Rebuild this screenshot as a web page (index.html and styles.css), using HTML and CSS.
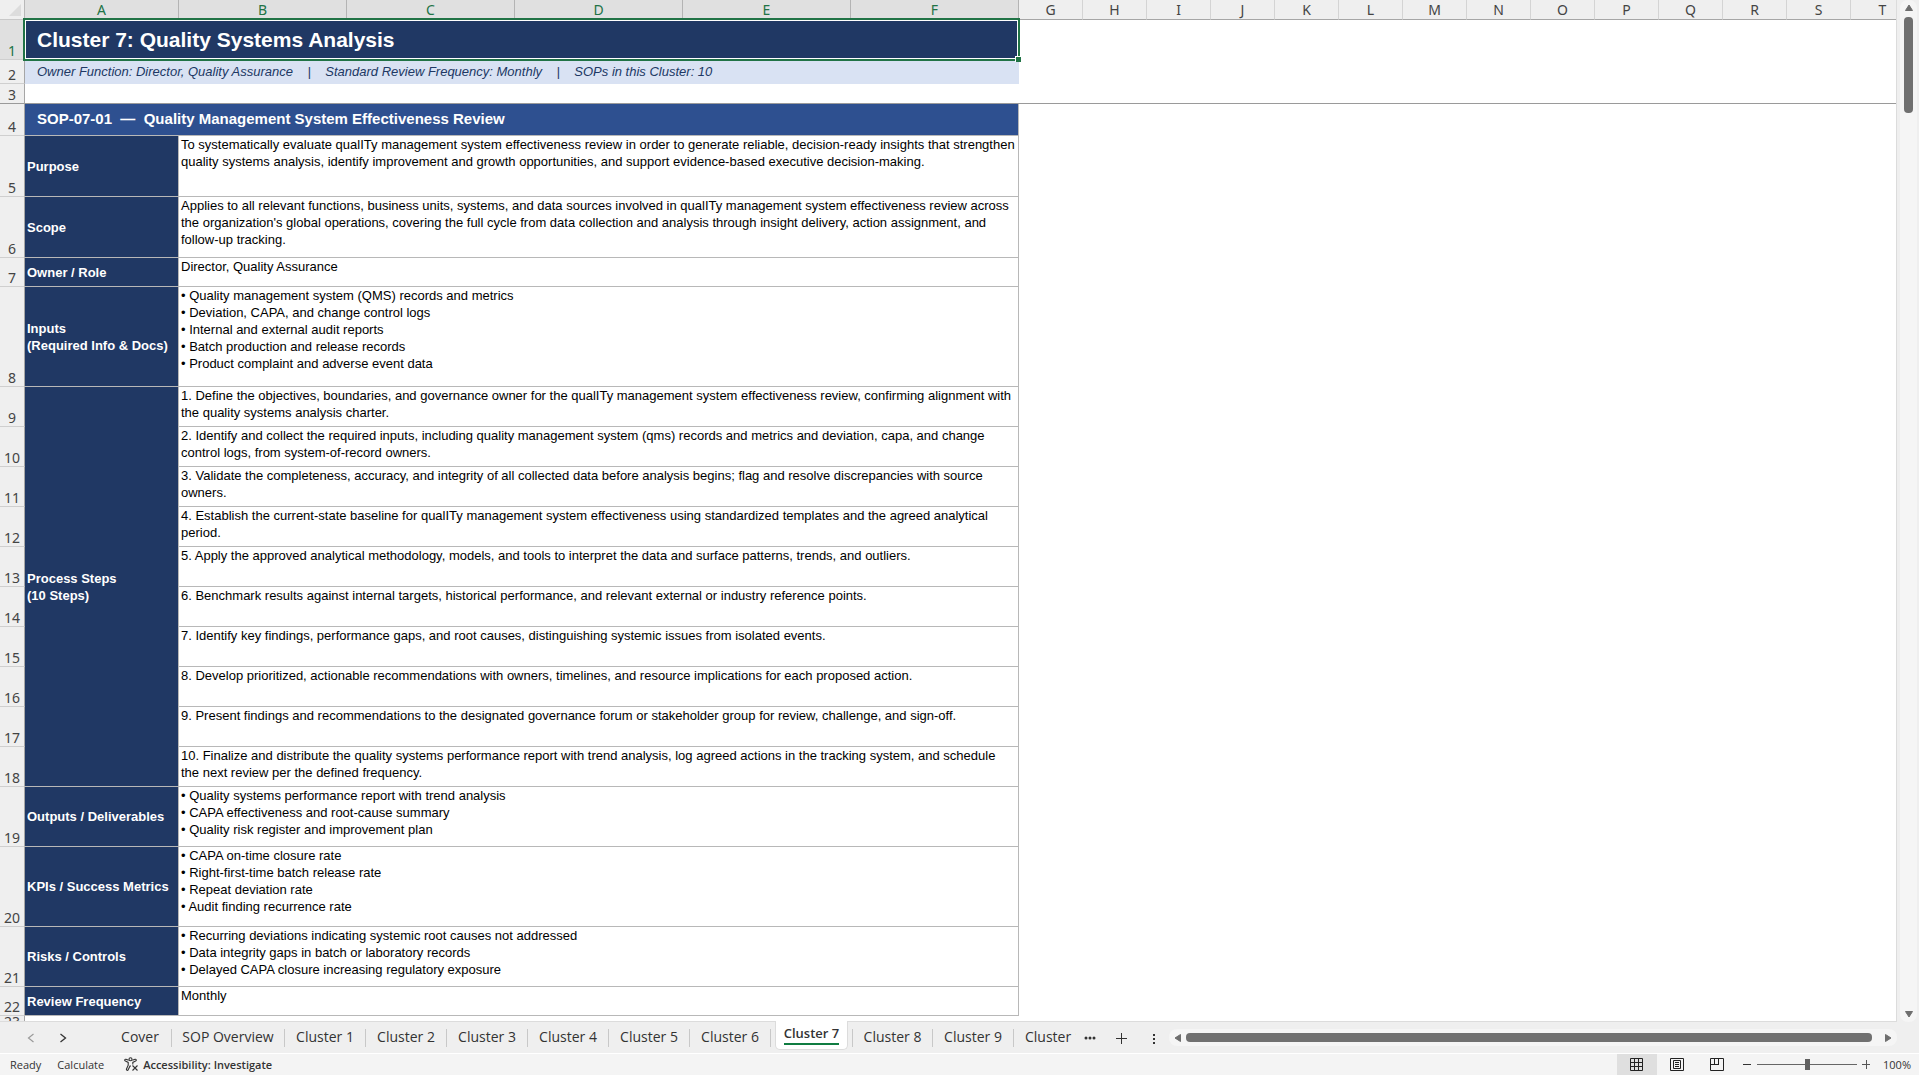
FILE: index.html
```html
<!DOCTYPE html>
<html lang="en">
  <head>
    <meta charset="utf-8">
    <title>Cluster 7</title>
    <link rel="stylesheet" href="styles.css">
  </head>
  <body>
    <main class="workspace">
      <div class="sheet">
        <table class="grid">
          <colgroup>
            <col class="col-num">
            <col class="col-label">
            <col class="col-wide" span="5">
            <col class="col-std" span="14">
          </colgroup>
          <thead>
            <tr>
              <td class="corner"><svg width="12" height="12" viewBox="0 0 12 12"><path d="M12 0v12H0z" fill="#dcdcdc"/></svg></td>
              <th class="sel">A</th><th class="sel">B</th><th class="sel">C</th><th class="sel">D</th><th class="sel">E</th><th class="sel">F</th>
              <th>G</th><th>H</th><th>I</th><th>J</th><th>K</th><th>L</th><th>M</th><th>N</th><th>O</th><th>P</th><th>Q</th><th>R</th><th>S</th><th>T</th>
            </tr>
          </thead>
          <tbody>
            <tr class="h40">
              <th class="sel">1</th>
              <td class="title" colspan="6">Cluster 7: Quality Systems Analysis<span class="handle"></span></td>
              <td colspan="14"></td>
            </tr>
            <tr class="h24">
              <th>2</th>
              <td class="meta" colspan="6">Owner Function: Director, Quality Assurance &nbsp;&nbsp; | &nbsp;&nbsp; Standard Review Frequency: Monthly &nbsp;&nbsp; | &nbsp;&nbsp; SOPs in this Cluster: 10</td>
              <td colspan="14"></td>
            </tr>
            <tr class="h20 frozen">
              <th>3</th>
              <td colspan="20"></td>
            </tr>
            <tr class="h32">
              <th>4</th>
              <td class="sop" colspan="6">SOP-07-01 &nbsp;— &nbsp;Quality Management System Effectiveness Review</td>
              <td colspan="14"></td>
            </tr>
            <tr class="h61">
              <th>5</th>
              <td class="label">Purpose</td>
              <td class="text" colspan="5">To systematically evaluate qualITy management system effectiveness review in order to generate reliable, decision-ready insights that strengthen<br>quality systems analysis, identify improvement and growth opportunities, and support evidence-based executive decision-making.</td>
              <td colspan="14"></td>
            </tr>
            <tr class="h61">
              <th>6</th>
              <td class="label">Scope</td>
              <td class="text" colspan="5">Applies to all relevant functions, business units, systems, and data sources involved in qualITy management system effectiveness review across<br>the organization's global operations, covering the full cycle from data collection and analysis through insight delivery, action assignment, and<br>follow-up tracking.</td>
              <td colspan="14"></td>
            </tr>
            <tr class="h29">
              <th>7</th>
              <td class="label">Owner / Role</td>
              <td class="text" colspan="5">Director, Quality Assurance</td>
              <td colspan="14"></td>
            </tr>
            <tr class="h100">
              <th>8</th>
              <td class="label">Inputs<br>(Required Info &amp; Docs)</td>
              <td class="text" colspan="5">• Quality management system (QMS) records and metrics<br>• Deviation, CAPA, and change control logs<br>• Internal and external audit reports<br>• Batch production and release records<br>• Product complaint and adverse event data</td>
              <td colspan="14"></td>
            </tr>
            <tr class="h40">
              <th>9</th>
              <td class="label" rowspan="10">Process Steps<br>(10 Steps)</td>
              <td class="text" colspan="5">1. Define the objectives, boundaries, and governance owner for the qualITy management system effectiveness review, confirming alignment with<br>the quality systems analysis charter.</td>
              <td colspan="14"></td>
            </tr>
            <tr class="h40">
              <th>10</th>
              <td class="text" colspan="5">2. Identify and collect the required inputs, including quality management system (qms) records and metrics and deviation, capa, and change<br>control logs, from system-of-record owners.</td>
              <td colspan="14"></td>
            </tr>
            <tr class="h40">
              <th>11</th>
              <td class="text" colspan="5">3. Validate the completeness, accuracy, and integrity of all collected data before analysis begins; flag and resolve discrepancies with source<br>owners.</td>
              <td colspan="14"></td>
            </tr>
            <tr class="h40">
              <th>12</th>
              <td class="text" colspan="5">4. Establish the current-state baseline for qualITy management system effectiveness using standardized templates and the agreed analytical<br>period.</td>
              <td colspan="14"></td>
            </tr>
            <tr class="h40">
              <th>13</th>
              <td class="text" colspan="5">5. Apply the approved analytical methodology, models, and tools to interpret the data and surface patterns, trends, and outliers.</td>
              <td colspan="14"></td>
            </tr>
            <tr class="h40">
              <th>14</th>
              <td class="text" colspan="5">6. Benchmark results against internal targets, historical performance, and relevant external or industry reference points.</td>
              <td colspan="14"></td>
            </tr>
            <tr class="h40">
              <th>15</th>
              <td class="text" colspan="5">7. Identify key findings, performance gaps, and root causes, distinguishing systemic issues from isolated events.</td>
              <td colspan="14"></td>
            </tr>
            <tr class="h40">
              <th>16</th>
              <td class="text" colspan="5">8. Develop prioritized, actionable recommendations with owners, timelines, and resource implications for each proposed action.</td>
              <td colspan="14"></td>
            </tr>
            <tr class="h40">
              <th>17</th>
              <td class="text" colspan="5">9. Present findings and recommendations to the designated governance forum or stakeholder group for review, challenge, and sign-off.</td>
              <td colspan="14"></td>
            </tr>
            <tr class="h40">
              <th>18</th>
              <td class="text" colspan="5">10. Finalize and distribute the quality systems performance report with trend analysis, log agreed actions in the tracking system, and schedule<br>the next review per the defined frequency.</td>
              <td colspan="14"></td>
            </tr>
            <tr class="h60">
              <th>19</th>
              <td class="label">Outputs / Deliverables</td>
              <td class="text" colspan="5">• Quality systems performance report with trend analysis<br>• CAPA effectiveness and root-cause summary<br>• Quality risk register and improvement plan</td>
              <td colspan="14"></td>
            </tr>
            <tr class="h80">
              <th>20</th>
              <td class="label">KPIs / Success Metrics</td>
              <td class="text" colspan="5">• CAPA on-time closure rate<br>• Right-first-time batch release rate<br>• Repeat deviation rate<br>• Audit finding recurrence rate</td>
              <td colspan="14"></td>
            </tr>
            <tr class="h60">
              <th>21</th>
              <td class="label">Risks / Controls</td>
              <td class="text" colspan="5">• Recurring deviations indicating systemic root causes not addressed<br>• Data integrity gaps in batch or laboratory records<br>• Delayed CAPA closure increasing regulatory exposure</td>
              <td colspan="14"></td>
            </tr>
            <tr class="h29">
              <th>22</th>
              <td class="label">Review Frequency</td>
              <td class="text" colspan="5">Monthly</td>
              <td colspan="14"></td>
            </tr>
            <tr class="h12">
              <th>23</th>
              <td colspan="20"></td>
            </tr>
          </tbody>
        </table>
      </div>
      <div class="vscroll">
        <button class="arrow" aria-label="Scroll up"><svg width="10" height="8" viewBox="0 0 10 8"><path d="M5 1l3.500 5.500h-7z"/></svg></button>
        <div class="vthumb"></div>
        <button class="arrow" aria-label="Scroll down"><svg width="10" height="8" viewBox="0 0 10 8"><path d="M5 7l3.500-5.500h-7z"/></svg></button>
      </div>
    </main>

    <nav class="tabbar">
      <div class="tabnav">
        <button aria-label="Previous sheet"><svg width="8" height="10" viewBox="0 0 8 10"><path d="M6.500 1l-5 4 5 4" fill="none" stroke="#9a9a9a" stroke-width="1.200"/></svg></button>
        <button aria-label="Next sheet"><svg width="8" height="10" viewBox="0 0 8 10"><path d="M1.500 1l5 4-5 4" fill="none" stroke="#333" stroke-width="1.300"/></svg></button>
      </div>
      <div class="tabs">
        <button class="tab cover">Cover</button>
        <button class="tab overview">SOP Overview</button>
        <button class="tab">Cluster 1</button>
        <button class="tab">Cluster 2</button>
        <button class="tab">Cluster 3</button>
        <button class="tab">Cluster 4</button>
        <button class="tab">Cluster 5</button>
        <button class="tab">Cluster 6</button>
        <button class="tab active"><span>Cluster 7</span></button>
        <button class="tab after">Cluster 8</button>
        <button class="tab">Cluster 9</button>
        <button class="tab cut">Cluster 10</button>
      </div>
      <div class="tabtools">
        <button aria-label="More sheets"><svg width="12" height="12" viewBox="0 0 12 12" fill="#333"><circle cx="2" cy="6" r="1.500"/><circle cx="6" cy="6" r="1.500"/><circle cx="10" cy="6" r="1.500"/></svg></button>
        <button aria-label="New sheet"><svg width="12" height="12" viewBox="0 0 12 12"><path d="M0 6.500h11M5.500 1v11" stroke="#333" stroke-width="1"/></svg></button>
        <button aria-label="Resize tab bar"><svg width="12" height="12" viewBox="0 0 12 12" fill="#333"><path d="M5 2h2v2H5zM5 6h2v2H5zM5 10h2v2H5z"/></svg></button>
      </div>
      <div class="hscroll">
        <button class="arrow" aria-label="Scroll left"><svg width="8" height="10" viewBox="0 0 8 10"><path d="M1 5l5.500-3.500v7z"/></svg></button>
        <div class="hthumb"></div>
        <button class="arrow" aria-label="Scroll right"><svg width="8" height="10" viewBox="0 0 8 10"><path d="M7 5L1.500 1.500v7z"/></svg></button>
      </div>
    </nav>

    <footer class="status">
      <span class="state">Ready</span>
      <span class="state">Calculate</span>
      <button class="access">
        <svg width="15" height="15" viewBox="0 0 15 15" fill="none" stroke="#333" stroke-width="1.100"><circle cx="6.500" cy="2.200" r="1.500"/><path d="M4.700 3.200L2 2.300c-1.300-.3-1.800 1.300-.6 1.800l2.800 1.300v2.700L2.500 12c-.4 1.400 1.200 1.800 1.700.7L6 9h1M8.300 3.200l2.700-.9c1.300-.3 1.800 1.300.6 1.800L8.800 5.400v2M8.500 8.500l5 5M13.500 8.500l-5 5"/></svg>
        Accessibility: Investigate
      </button>
      <div class="views">
        <button class="on" aria-label="Normal view"><svg width="14" height="14" viewBox="0 0 14 14" fill="none" stroke="#222"><path d="M.5.500h12v12H.5zM.5 4.500h12M.5 8.500h12M4.500.500v12M8.500.500v12"/></svg></button>
        <button aria-label="Page layout"><svg width="14" height="14" viewBox="0 0 14 14" fill="none" stroke="#222"><path d="M.5.500h13v12H.5zM3.500 2.500h7v8h-7zM5 4.500h4M5 6.500h4M5 8.500h4"/></svg></button>
        <button aria-label="Page break preview"><svg width="14" height="14" viewBox="0 0 14 14" fill="none" stroke="#222"><path d="M.5.500h13v12H.5zM4.500.500v6M8.500.500v6M0 6.500h9"/></svg></button>
      </div>
      <div class="zoom">
        <button aria-label="Zoom out"><svg width="9" height="9" viewBox="0 0 9 9"><path d="M0 4.500h8" stroke="#333"/></svg></button>
        <input type="range" min="0" max="100" value="50" aria-label="Zoom">
        <button aria-label="Zoom in"><svg width="9" height="9" viewBox="0 0 9 9"><path d="M0 4.500h8M4.500 0v9" stroke="#555"/></svg></button>
        <span class="percent">100%</span>
      </div>
    </footer>
  </body>
</html>
```
FILE: styles.css
```css
* { box-sizing: border-box; }

body {
  margin: 0;
  height: 100vh;
  display: flex;
  flex-direction: column;
  overflow: hidden;
  background: #efefef;
  color: #333;
  font-family: "Open Sans", "Noto Sans", sans-serif;
  font-size: 13px;
}
button {
  border: 0;
  padding: 0;
  margin: 0;
  background: none;
  font: inherit;
  color: inherit;
  display: flex;
  align-items: center;
  justify-content: center;
}
svg { display: block; }

/* SHEET ======================================= */
.workspace {
  flex: 1;
  min-height: 0;
  display: flex;
}
.sheet {
  flex: 1;
  min-width: 0;
  overflow: hidden;
  background: #fff;
  border-right: 1px solid #dcdcdc;
  border-bottom: 1px solid #dcdcdc;
}
.grid {
  width: 0;
  table-layout: fixed;
  border-collapse: separate;
  border-spacing: 0;
}
.col-num { width: 25px; }
.col-label { width: 154px; }
.col-wide { width: 168px; }
.col-std { width: 64px; }

.grid td, .grid th {
  padding: 0;
  white-space: nowrap;
}
.grid th {
  background: #efefef;
  color: #444;
  font-family: "Noto Sans", sans-serif;
  font-weight: normal;
  font-size: 14px;
  text-align: center;
}
thead th {
  height: 20px;
  line-height: 18px;
  border-right: 1px solid #d4d4d4;
  border-bottom: 1px solid #a6a6a6;
}
thead th.sel { border-right-color: #b4b4b4; }
.grid th.sel {
  background: #e0e0e0;
  color: #217346;
}
.corner {
  background: #efefef;
  border-right: 1px solid #b8b8b8;
  border-bottom: 1px solid #c8c8c8;
}
.corner svg { margin-left: 9px; }
tbody th {
  vertical-align: bottom;
  line-height: 16px;
  border-right: 1px solid #a6a6a6;
  border-bottom: 1px solid #cfcfcf;
}

.h12 { height: 12px; }
.h20 { height: 20px; }
.h24 { height: 24px; }
.h29 { height: 29px; }
.h32 { height: 32px; }
.h40 { height: 40px; }
.h60 { height: 60px; }
.h61 { height: 61px; }
.h80 { height: 80px; }
.h100 { height: 100px; }
.h12 th { line-height: 12px; }

.frozen th, .frozen td { border-bottom: 1px solid #9a9a9a; }

.title, .meta, .sop, .label, .text {
  font-family: "Liberation Sans", Arial, sans-serif;
}
.grid .title {
  position: relative;
  padding-left: 12px;
  background: #203864;
  color: #fff;
  font-size: 21px;
  font-weight: bold;
}
/* selection frame */
.title::after {
  content: '';
  position: absolute;
  top: -2px;
  left: -2px;
  right: -1px;
  bottom: -1px;
  border: 2px solid #217346;
  box-shadow: inset 0 0 0 1px #fff;
}
.handle {
  position: absolute;
  z-index: 1;
  right: -2px;
  bottom: -2px;
  width: 6px;
  height: 6px;
  background: #217346;
  border-top: 1px solid #fff;
  border-left: 1px solid #fff;
}
.grid .meta {
  padding: 0 0 2px 12px;
  background: #d9e2f3;
  color: #203864;
  font-size: 13px;
  font-style: italic;
}
.grid .sop {
  padding: 0 0 2px 12px;
  background: #2e5090;
  color: #fff;
  font-size: 15px;
  font-weight: bold;
  border-right: 1px solid #b8b8b8;
  border-bottom: 1px solid #b8b8b8;
}
.grid .label {
  padding-left: 2px;
  background: #203864;
  color: #fff;
  font-size: 13px;
  font-weight: bold;
  line-height: 17px;
  vertical-align: middle;
  border-right: 1px solid #b8b8b8;
  border-bottom: 1px solid #b8b8b8;
}
.grid .text {
  padding-left: 2px;
  color: #000;
  font-size: 13px;
  line-height: 17px;
  vertical-align: top;
  border-right: 1px solid #b8b8b8;
  border-bottom: 1px solid #b8b8b8;
}

/* SCROLLBARS ================================== */
.arrow svg { fill: #6e6e6e; stroke: #6e6e6e; stroke-linejoin: round; }
.vscroll {
  width: 17px;
  margin: 0 2px 0 3px;
  padding: 4px 0;
  display: flex;
  flex-direction: column;
  align-items: center;
  gap: 5px;
  background: #f5f5f5;
  border-radius: 8px;
}
.vthumb {
  width: 9px;
  height: 96px;
  margin-bottom: auto;
  border-radius: 4px;
  background: #707070;
}
.hscroll {
  flex: 1;
  height: 17px;
  padding: 0 5px;
  display: flex;
  align-items: center;
  gap: 4px;
  border-radius: 8px;
  background: #f5f5f5;
}
.hthumb {
  flex: 1;
  height: 9px;
  margin-right: 8px;
  border-radius: 4px;
  background: #707070;
}

/* TABS ======================================== */
.tabbar {
  height: 32px;
  padding-right: 22px;
  display: flex;
  align-items: center;
  border-bottom: 1px solid #fff;
}
.tabnav {
  width: 109px;
  padding-left: 27px;
  display: flex;
  gap: 24px;
}
.tabs {
  height: 100%;
  display: flex;
  align-items: center;
}
.tab {
  width: 81px;
  height: 18px;
  padding-bottom: 2px;
  border-right: 1px solid #c8c8c8;
  font-size: 14px;
  white-space: nowrap;
}
.cover { width: 63px; }
.overview { width: 113px; }
.tab.active {
  align-self: flex-start;
  width: 73px;
  height: 29px;
  margin: -1px 4px 0 4px;
  border: 1px solid #dcdcdc;
  border-top: 0;
  border-radius: 0 0 5px 5px;
  background: #fff;
  font-size: 13px;
  font-weight: 600;
}
.active span {
  line-height: 20px;
  border-bottom: 2px solid #107c41;
}
.tab.after { border-left: 1px solid #c8c8c8; }
.cut {
  width: 62px;
  padding-left: 11px;
  justify-content: flex-start;
  overflow: hidden;
  border: 0;
}
.tabtools {
  margin-left: 8px;
  padding-right: 9px;
  display: flex;
  gap: 20px;
}

/* STATUS BAR ================================== */
.status {
  height: 21px;
  padding: 0 8px 0 10px;
  display: flex;
  align-items: center;
  background: #f4f4f4;
  font-size: 11px;
}
.state { margin-right: 16px; }
.access {
  margin-left: 4px;
  gap: 4px;
  font-weight: 600;
}
.views {
  height: 100%;
  margin-left: auto;
  margin-right: 6px;
  display: flex;
}
.views button { width: 40px; }
.views .on { background: #dfdfdf; }
.zoom {
  display: flex;
  align-items: center;
  gap: 5px;
}
.zoom input {
  -webkit-appearance: none;
  appearance: none;
  width: 100px;
  height: 11px;
  margin: 0;
  background: linear-gradient(#666, #666) center / 100% 1px no-repeat;
}
.zoom input::-webkit-slider-thumb {
  -webkit-appearance: none;
  width: 5px;
  height: 11px;
  background: #606060;
}
.percent {
  margin-left: 7px;
}
```
